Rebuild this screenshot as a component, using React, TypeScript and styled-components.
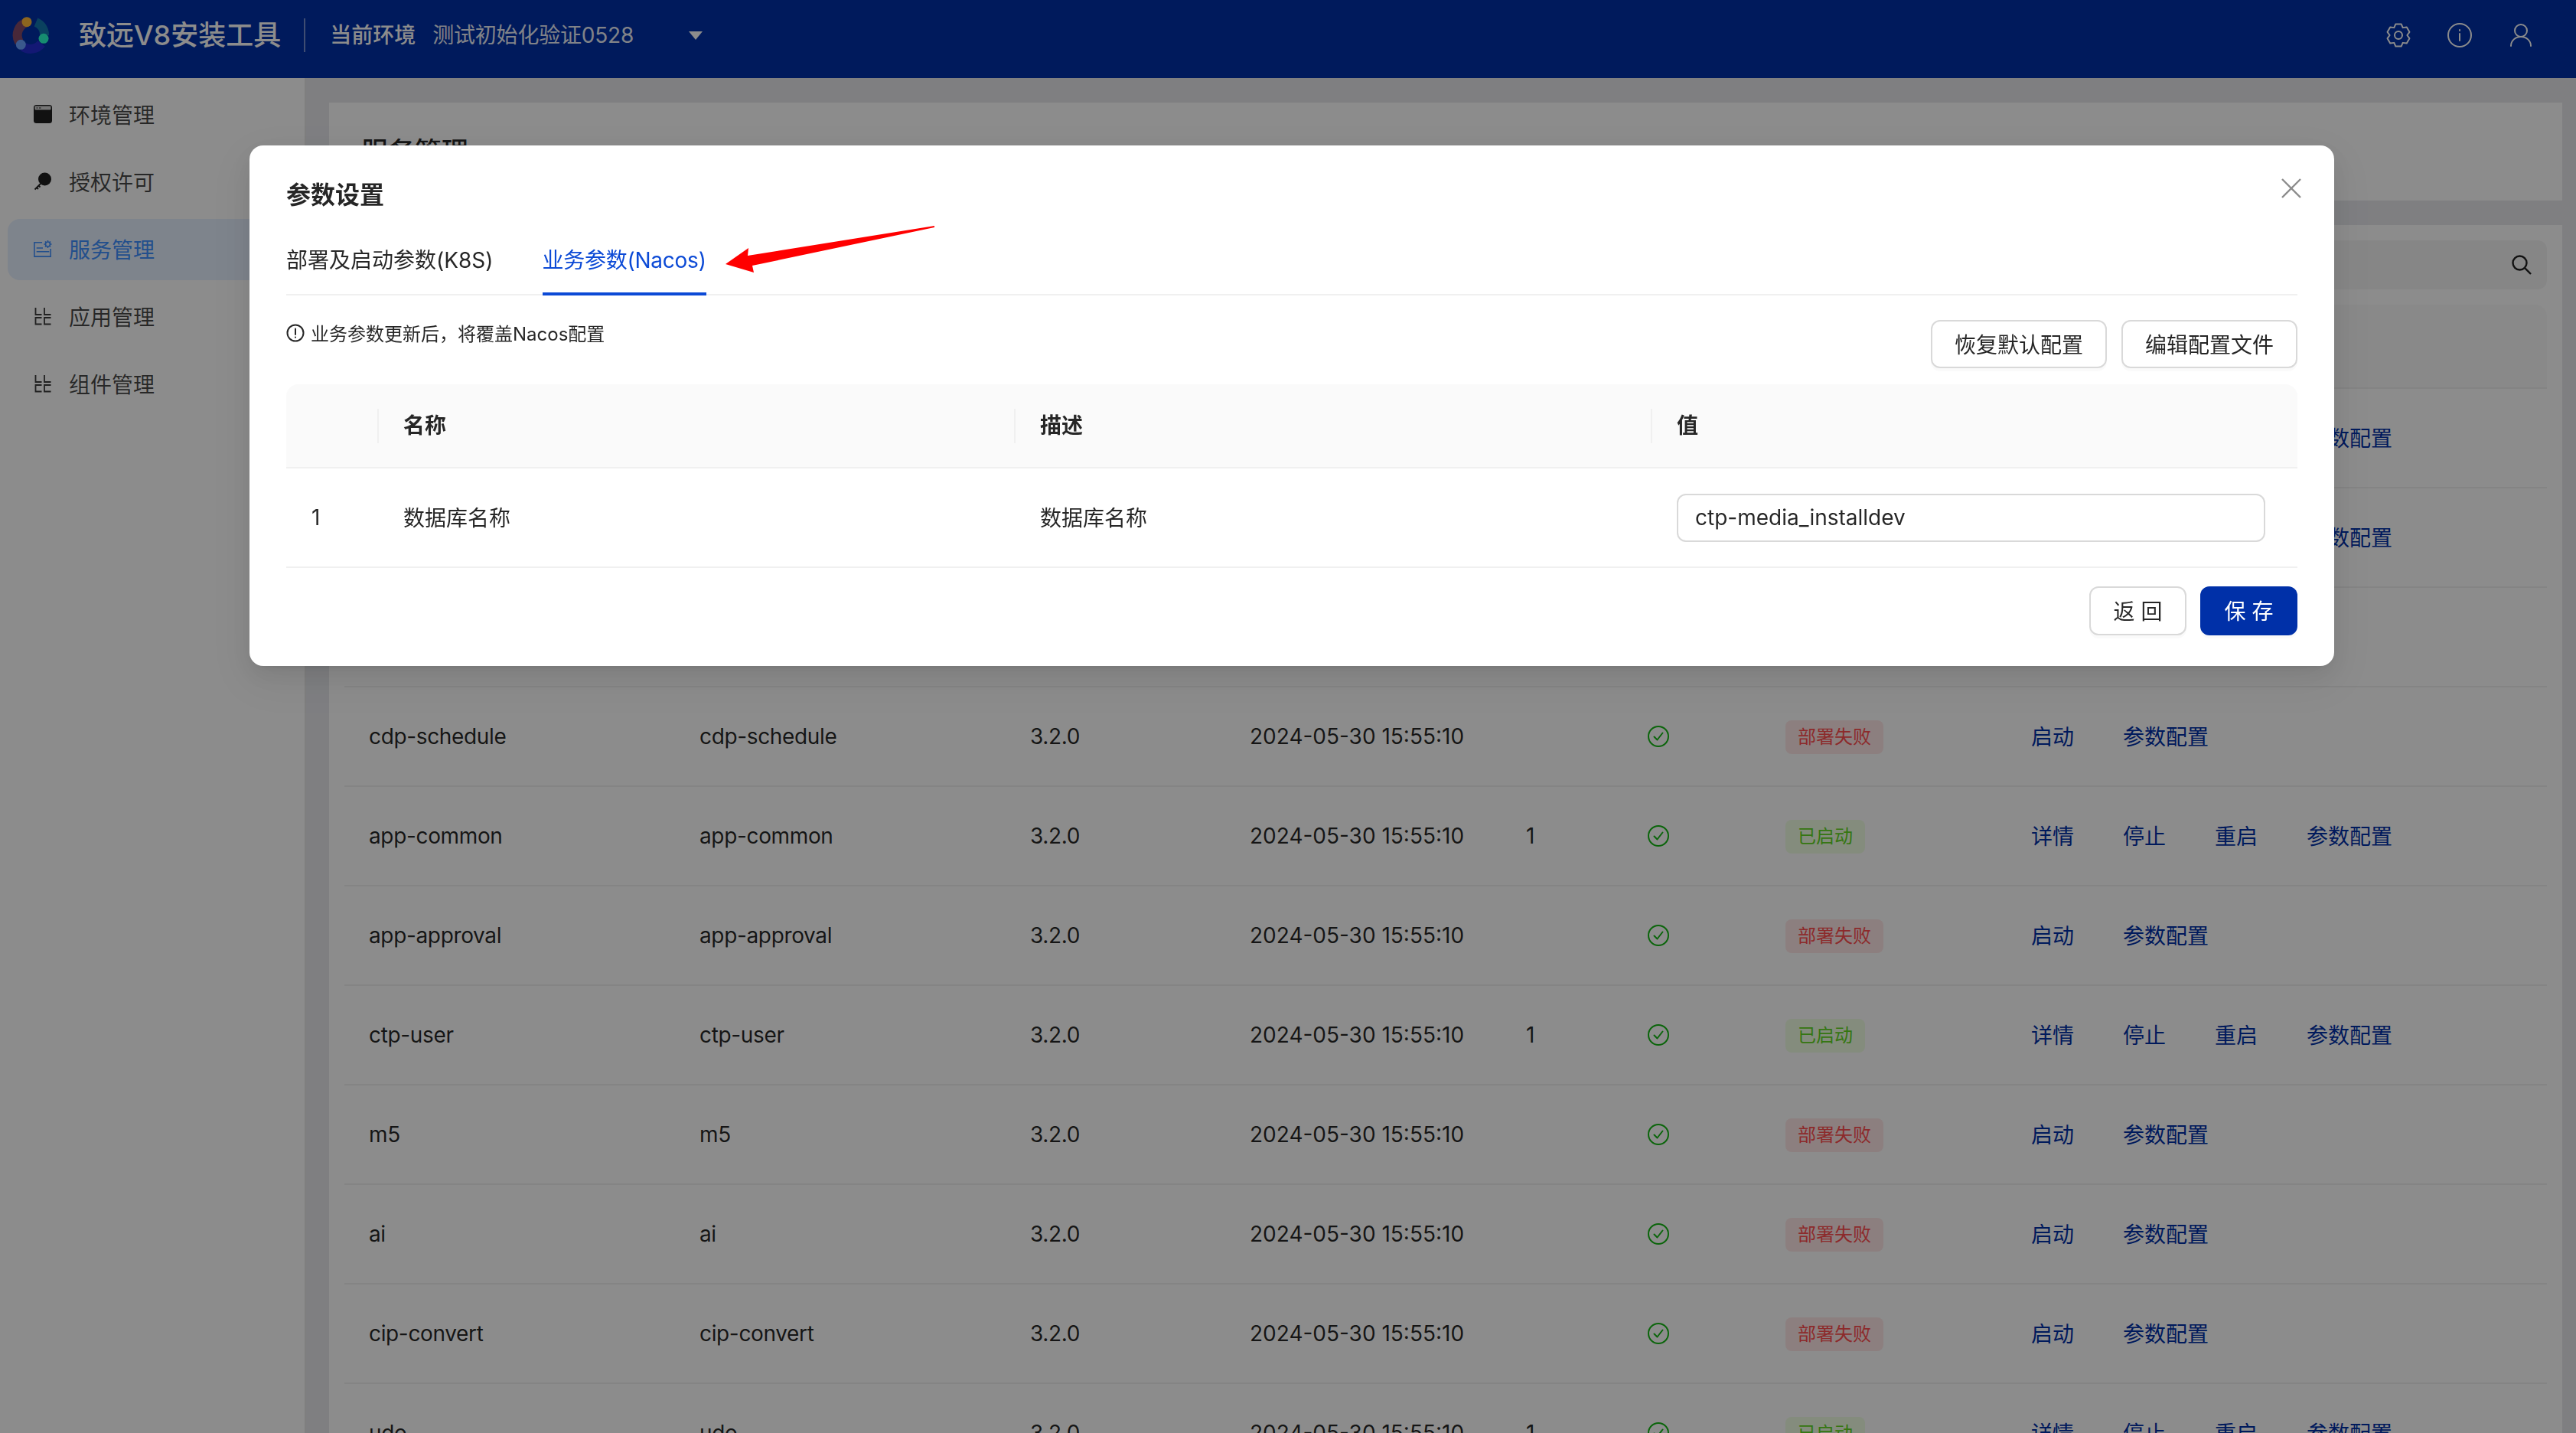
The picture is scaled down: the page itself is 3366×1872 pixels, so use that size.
import React from 'react';
import styled, { createGlobalStyle } from 'styled-components';

const GlobalStyle=createGlobalStyle`
  html,body{
    margin:0;
    padding:0;
    height:100%;
    overflow:hidden;
    background:#e7e8ec;
  }
  body{
    font-family:Inter,"Noto Sans CJK SC",sans-serif;
    font-size:28px;
    color:rgba(0,0,0,0.85);
  }
  *{
    box-sizing:border-box;
  }
`;

const Page=styled.div`
  display:flex;
  flex-direction:column;
  height:100vh;
  overflow:hidden;
`;

const Header=styled.header`
  display:flex;
  align-items:flex-start;
  flex:0 0 102px;
  height:102px;
  padding:22px 56px 0 16px;
  background:#0030a8;
  color:#fff;
`;

const Brand=styled.div`
  display:flex;
  align-items:center;
  height:48px;
  gap:39px;
  font-size:36px;
  font-weight:500;
  line-height:48px;
`;

const HeaderDivider=styled.span`
  width:2px;
  height:44px;
  margin:0 32px 0 30px;
  background:rgba(255,255,255,0.45);
`;

const EnvRow=styled.div`
  display:flex;
  align-items:center;
  height:48px;
  line-height:48px;
`;

const EnvLabel=styled.span`
  font-weight:500;
  margin-right:22px;
`;

const EnvValue=styled.span`
  font-weight:400;
  width:335px;
  letter-spacing:-0.2px;
  opacity:0.92;
`;

const Caret=styled.i`
  width:0;
  height:0;
  border-left:9px solid transparent;
  border-right:9px solid transparent;
  border-top:11px solid #fff;
`;

const HeaderIcons=styled.div`
  display:flex;
  align-items:center;
  height:48px;
  gap:48px;
  margin-left:auto;
  svg{
    display:block;
    width:32px;
    height:32px;
    fill:none;
    stroke:#fff;
    stroke-width:2;
    stroke-linecap:round;
    stroke-linejoin:round;
  }
`;

const Body=styled.div`
  display:flex;
  flex:1;
  min-height:0;
`;

const Sidebar=styled.nav`
  flex:0 0 400px;
  padding:8px 0 0 10px;
  background:#fff;
  border-right:2px solid #e8e8e8;
`;

const SideItem=styled.div<{$active?:boolean}>`
  display:flex;
  align-items:center;
  gap:22px;
  height:80px;
  margin-bottom:8px;
  padding:0 0 2px 34px;
  border-radius:16px;
  font-size:28px;
  color:${props=>props.$active?'#3f90ff':'rgba(0,0,0,0.72)'};
  background:${props=>props.$active?'#e6f0ff':'transparent'};
  svg{
    display:block;
    width:24px;
    height:24px;
    flex:none;
    overflow:visible;
  }
`;

const Main=styled.main`
  display:flex;
  flex-direction:column;
  flex:1;
  gap:32px;
  min-width:0;
  padding:32px 18px 0 30px;
`;

const TitleCard=styled.section`
  flex:0 0 128px;
  padding:40px 42px;
  background:#fff;
`;

const PageTitle=styled.h1`
  margin:0;
  font-size:35px;
  font-weight:500;
  line-height:48px;
`;

const ListCard=styled.section`
  flex:1;
  min-height:0;
  padding:20px;
  background:#fff;
`;

const SearchBar=styled.div`
  display:flex;
  align-items:center;
  justify-content:flex-end;
  height:64px;
  margin-bottom:20px;
  padding-right:20px;
  border-radius:12px;
  background:#f5f5f5;
  svg{
    display:block;
    width:26px;
    height:26px;
    fill:none;
    stroke:#1f1f1f;
    stroke-width:2.4;
  }
`;

const columns='432px 432px 287px 361px 159px 180px 321px 1fr';

const ListHead=styled.div`
  height:110px;
  border-radius:16px 16px 0 0;
  border-bottom:2px solid #f0f0f0;
  background:#fafafa;
`;

const ListRow=styled.div`
  display:grid;
  grid-template-columns:${columns};
  align-items:center;
  height:130px;
  border-bottom:2px solid #f0f0f0;
`;

const ListCell=styled.div`
  padding-left:32px;
  white-space:nowrap;
  svg{
    display:block;
    width:28px;
    height:28px;
    fill:none;
    stroke:#14b814;
    stroke-width:2;
    stroke-linecap:round;
    stroke-linejoin:round;
  }
`;

const NameCell=styled(ListCell)`
  letter-spacing:-0.35px;
`;

const Tag=styled.span<{$ok:boolean}>`
  display:block;
  width:fit-content;
  height:44px;
  margin-top:2px;
  padding:0 16px;
  border-radius:8px;
  font-size:24px;
  line-height:44px;
  color:${props=>props.$ok?'#62d822':'#ff4d4f'};
  background:${props=>props.$ok?'#f0ffe4':'#ffe8e8'};
`;

const Actions=styled.div`
  display:flex;
  gap:64px;
  margin-bottom:3px;
  padding-left:32px;
  white-space:nowrap;
`;

const ActionLink=styled.a`
  color:#0030a8;
`;

const Mask=styled.div`
  position:fixed;
  inset:0;
  z-index:10;
  padding:190px 0 0 326px;
  background:rgba(0,0,0,0.45);
`;

const Modal=styled.div`
  position:relative;
  width:2724px;
  height:680px;
  padding:41px 48px 40px;
  border-radius:18px;
  background:#fff;
  box-shadow:0 12px 32px 0 rgba(0,0,0,0.08),0 6px 12px -8px rgba(0,0,0,0.12),0 18px 56px 16px rgba(0,0,0,0.05);
`;

const CloseIcon=styled.svg`
  position:absolute;
  top:43px;
  right:43px;
  width:26px;
  height:26px;
  fill:none;
  stroke:#8c8c8c;
  stroke-width:2.4;
`;

const ArrowMark=styled.svg`
  position:absolute;
  top:103px;
  left:620px;
  width:277px;
  height:65px;
  fill:#ff0000;
`;

const ModalTitle=styled.h2`
  margin:0 0 31px;
  font-size:32px;
  font-weight:600;
  line-height:48px;
`;

const TabNav=styled.div`
  display:flex;
  gap:64px;
  height:76px;
  border-bottom:2px solid #f0f0f0;
`;

const Tab=styled.div<{$active?:boolean}>`
  height:76px;
  line-height:60px;
  border-bottom:4px solid ${props=>props.$active?'#0c4ad6':'transparent'};
  color:${props=>props.$active?'#0c4ad6':'rgba(0,0,0,0.85)'};
  letter-spacing:${props=>props.$active?'-0.25px':'0'};
`;

const Toolbar=styled.div`
  display:flex;
  justify-content:space-between;
  margin:32px 0 21px;
`;

const Hint=styled.div`
  display:flex;
  align-items:center;
  gap:8px;
  height:33px;
  font-size:24px;
  svg{
    display:block;
    width:24px;
    height:24px;
    fill:none;
    stroke:#262626;
    stroke-width:2;
    stroke-linecap:round;
  }
`;

const ButtonGroup=styled.div<{$margin?:string,$gap?:number}>`
  display:flex;
  justify-content:flex-end;
  gap:${props=>props.$gap||19}px;
  margin:${props=>props.$margin||'0'};
`;

const Button=styled.button<{$primary?:boolean}>`
  height:${props=>props.$primary?'64px':'63px'};
  padding:0 0 2px;
  width:${props=>props.$primary?'127px':'230px'};
  border:${props=>props.$primary?'none':'2px solid #d9d9d9'};
  border-radius:12px;
  font:inherit;
  font-size:28px;
  color:${props=>props.$primary?'#fff':'rgba(0,0,0,0.85)'};
  background:${props=>props.$primary?'#0030a8':'#fff'};
  box-shadow:0 4px 0 rgba(0,0,0,0.02);
`;

const BackButton=styled(Button)`
  width:127px;
  height:64px;
`;

const ParamHead=styled.div`
  display:grid;
  grid-template-columns:120px 832px 832px 1fr;
  align-items:center;
  height:110px;
  border-radius:16px 16px 0 0;
  border-bottom:2px solid #f0f0f0;
  background:#fafafa;
  font-weight:600;
`;

const ParamHeadCell=styled.div`
  position:relative;
  height:45px;
  padding-left:33px;
  line-height:45px;
  &:not(:first-child)::before{
    content:"";
    position:absolute;
    top:0;
    left:-1px;
    width:2px;
    height:45px;
    background:#f0f0f0;
  }
`;

const ParamRow=styled.div`
  display:grid;
  grid-template-columns:120px 832px 832px 1fr;
  align-items:center;
  height:130px;
  border-bottom:2px solid #f0f0f0;
`;

const ParamCell=styled.div<{$raise?:boolean}>`
  padding-left:33px;
  margin-bottom:${props=>props.$raise?'2px':'0'};
`;

const ValueInput=styled.input`
  display:block;
  width:769px;
  height:63px;
  padding:0 22px;
  border:2px solid #d9d9d9;
  border-radius:12px;
  outline:none;
  font:inherit;
  color:rgba(0,0,0,0.85);
`;

const gearPath=()=>{
  const pts:string[]=[];
  for(let i=0;i<6;i++){
    const a=(i*60-90)*Math.PI/180;
    const d=14*Math.PI/180;
    const v=30*Math.PI/180;
    [[a-d,15],[a+d,15],[a+v,11.4]].forEach(([t,r])=>{
      pts.push(`${(16+r*Math.cos(t)).toFixed(2)} ${(16+r*Math.sin(t)).toFixed(2)}`);
    });
  }
  return 'M'+pts.join('L')+'Z';
};

const Logo=()=><svg width="48" height="48" viewBox="0 0 48 48" fill="none">
  <path d="M9 33A18 18 0 0 1 19 7" stroke="#a45058" strokeWidth="12" opacity="0.8"/>
  <path d="M31 7A18 18 0 0 1 42 24" stroke="#188aae" strokeWidth="12" opacity="0.8"/>
  <path d="M38 35A18 18 0 0 1 14 39" stroke="#2c2cde" strokeWidth="12" opacity="0.8"/>
  <circle cx="19" cy="6.7" r="6.5" fill="#ffb83a"/>
  <circle cx="41" cy="28.3" r="6.5" fill="#28ffcc"/>
  <circle cx="11.3" cy="36.3" r="6.5" fill="#6aa0ff"/>
</svg>;

const WindowIcon=()=><svg viewBox="0 0 24 24">
  <rect x="0" y="0" width="24" height="24" rx="3.5" fill="#1f1f1f"/>
  <rect x="1.5" y="1.5" width="21" height="5" rx="1" fill="#d8d8d8"/>
  <path d="M3.5 4h2M7 4h2.5" stroke="#1f1f1f" strokeWidth="1"/>
</svg>;

const KeyIcon=()=><svg viewBox="0 0 24 24">
  <circle cx="14.5" cy="9" r="8.5" fill="#1f1f1f"/>
  <path d="M9 15L1.5 22.5M4 20l2 2M6.500 17.500l2 2" stroke="#1f1f1f" strokeWidth="1.800" fill="none"/>
</svg>;

const ServiceIcon=()=><svg viewBox="0 0 26 24" fill="none" stroke="#3f90ff" strokeWidth="1.700">
  <path d="M12 3H1v20h23V12"/>
  <path d="M4 11h9M4 16h18"/>
  <circle cx="20" cy="5.500" r="3.200"/>
  <path d="M20 0v2M20 9v2M14.500 5.500h2M23.500 5.500h2M16.200 1.700l1.400 1.400M22.400 7.900l1.400 1.400M23.800 1.700l-1.400 1.400M17.600 7.900l-1.400 1.400"/>
</svg>;

const BlocksIcon=()=><svg viewBox="0 0 24 24" fill="none" stroke="#3c3c3c" strokeWidth="1.800">
  <path d="M2.500 1v9h8M14 1v9h8.500M10.500 14h-8v8.500h8M22.500 14H14v8.500h8.500"/>
</svg>;

const CheckIcon=()=><svg viewBox="0 0 28 28">
  <circle cx="14" cy="14" r="13"/>
  <path d="M8.500 14.500l4 4 7-9"/>
</svg>;

const sideItems=[
  {label:'环境管理',icon:<WindowIcon />},
  {label:'授权许可',icon:<KeyIcon />},
  {label:'服务管理',icon:<ServiceIcon />,active:true},
  {label:'应用管理',icon:<BlocksIcon />},
  {label:'组件管理',icon:<BlocksIcon />},
];

const services=[
  {name:'',ok:true},
  {name:'',ok:true},
  {name:'',ok:false},
  {name:'cdp-schedule',ok:false},
  {name:'app-common',ok:true},
  {name:'app-approval',ok:false},
  {name:'ctp-user',ok:true},
  {name:'m5',ok:false},
  {name:'ai',ok:false},
  {name:'cip-convert',ok:false},
  {name:'udo',ok:true},
];

function App() {
  return <Page>
    <GlobalStyle />
    <Header>
      <Brand>
        <Logo />
        <span>致远V8安装工具</span>
      </Brand>
      <EnvRow>
        <HeaderDivider />
        <EnvLabel>当前环境</EnvLabel>
        <EnvValue>测试初始化验证0528</EnvValue>
        <Caret />
      </EnvRow>
      <HeaderIcons>
        <svg viewBox="0 0 32 32"><path d={gearPath()}/><circle cx="16" cy="16" r="5"/></svg>
        <svg viewBox="0 0 32 32"><circle cx="16" cy="16" r="15"/><path d="M16 14v9"/><path d="M16 9v1"/></svg>
        <svg viewBox="0 0 32 32"><circle cx="16" cy="10" r="8"/><path d="M3 30c0-7 6-12 13-12s13 5 13 12"/></svg>
      </HeaderIcons>
    </Header>
    <Body>
      <Sidebar>
        {sideItems.map(item=><SideItem key={item.label} $active={item.active}>
          {item.icon}
          <span>{item.label}</span>
        </SideItem>)}
      </Sidebar>
      <Main>
        <TitleCard>
          <PageTitle>服务管理</PageTitle>
        </TitleCard>
        <ListCard>
          <SearchBar>
            <svg viewBox="0 0 26 26"><circle cx="10.500" cy="10.500" r="9"/><path d="M17 17l8 8"/></svg>
          </SearchBar>
          <ListHead />
          {services.map((s,i)=><ListRow key={i}>
            <NameCell>{s.name}</NameCell>
            <NameCell>{s.name}</NameCell>
            <NameCell>{s.name&&'3.2.0'}</NameCell>
            <ListCell>{s.name&&'2024-05-30 15:55:10'}</ListCell>
            <ListCell>{s.ok&&s.name?'1':''}</ListCell>
            <ListCell><CheckIcon /></ListCell>
            <ListCell><Tag $ok={s.ok}>{s.ok?'已启动':'部署失败'}</Tag></ListCell>
            <Actions>
              {(s.ok?['详情','停止','重启','参数配置']:['启动','参数配置']).map(a=><ActionLink key={a}>{a}</ActionLink>)}
            </Actions>
          </ListRow>)}
        </ListCard>
      </Main>
    </Body>
    <Mask>
      <Modal>
        <CloseIcon viewBox="0 0 26 26"><path d="M1 1L25 25M25 1L1 25"/></CloseIcon>
        <ArrowMark viewBox="0 0 277 65"><polygon points="2,52 32,31 31,41 275,2 275,4 37,54 39,63"/></ArrowMark>
        <ModalTitle>参数设置</ModalTitle>
        <TabNav>
          <Tab>部署及启动参数(K8S)</Tab>
          <Tab $active>业务参数(Nacos)</Tab>
        </TabNav>
        <Toolbar>
          <Hint>
            <svg viewBox="0 0 24 24"><circle cx="12" cy="12" r="10.500"/><path d="M12 6.500v7.500"/><path d="M12 17.500v.2"/></svg>
            <span>业务参数更新后，将覆盖Nacos配置</span>
          </Hint>
          <ButtonGroup>
            <Button>恢复默认配置</Button>
            <Button>编辑配置文件</Button>
          </ButtonGroup>
        </Toolbar>
        <ParamHead>
          <ParamHeadCell />
          <ParamHeadCell>名称</ParamHeadCell>
          <ParamHeadCell>描述</ParamHeadCell>
          <ParamHeadCell>值</ParamHeadCell>
        </ParamHead>
        <ParamRow>
          <ParamCell>1</ParamCell>
          <ParamCell $raise>数据库名称</ParamCell>
          <ParamCell $raise>数据库名称</ParamCell>
          <ParamCell><ValueInput defaultValue="ctp-media_installdev" /></ParamCell>
        </ParamRow>
        <ButtonGroup $margin="24px 0 0" $gap={18}>
          <BackButton>返 回</BackButton>
          <Button $primary>保 存</Button>
        </ButtonGroup>
      </Modal>
    </Mask>
  </Page>
}

export default App;
